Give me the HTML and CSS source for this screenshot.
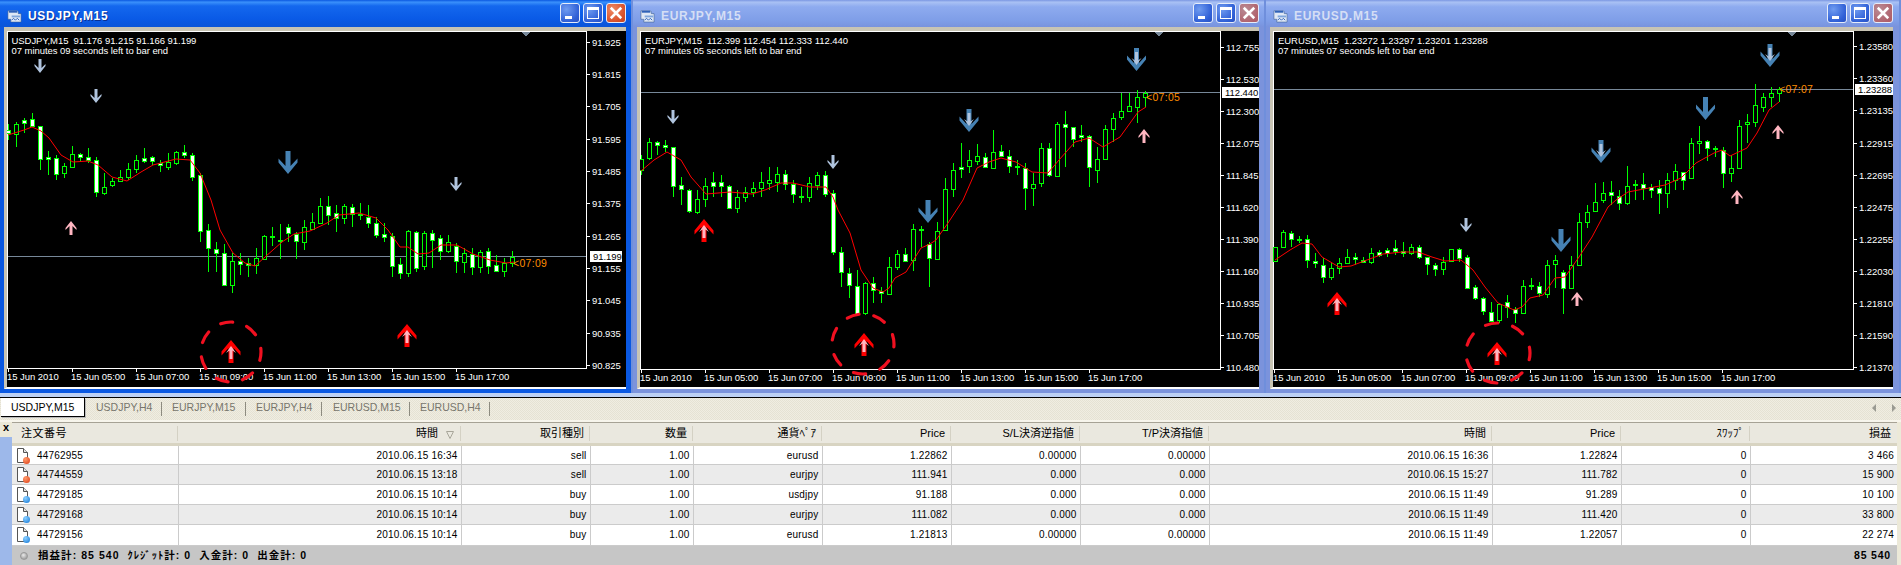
FILE: index.html
```html
<!DOCTYPE html>
<html lang="ja">
<head>
<meta charset="utf-8">
<title>MetaTrader terminal</title>
<link rel="stylesheet" href="styles.css">
</head>
<body>
<svg class="defs" width="0" height="0" aria-hidden="true">
  <symbol id="app" viewBox="0 0 16 16">
    <path d="M1 3h10l1 1v2h3v9H4v-3H1z" fill="#dfe8f5" stroke="#3d5c8c" stroke-width=".6"/>
    <path d="M2 3h9v2H2z" fill="#2f62b8"/>
    <path d="M5 8h9v2H5z" fill="#7fa6dc"/>
    <path d="M5 13l2-2 2 2 2-2 2 2" fill="none" stroke="#2f62b8"/>
  </symbol>
  <symbol id="doc" viewBox="0 0 14 17">
    <path d="M1.5 1.5h6l4 4v10h-10z" fill="#fff" stroke="#555"/>
    <path d="M7.500 1.500v4h4" fill="#e4e4e4" stroke="#555"/>
  </symbol>
</svg>

<div class="desktop">
  <section class="window active">
    <header class="title">
      <svg class="app-icon"><use href="#app"/></svg>
      <span class="title-text">USDJPY,M15</span>
      <span class="btn btn-min"><i></i></span>
      <span class="btn btn-max"><i></i></span>
      <span class="btn btn-close">
        <svg viewBox="0 0 12 12"><path d="M1.500 1.500l9 9m0-9l-9 9"/></svg>
      </span>
    </header>
    <div class="client"><svg class="chart" id="usdjpy"></svg></div>
  </section>
  <section class="window">
    <header class="title">
      <svg class="app-icon"><use href="#app"/></svg>
      <span class="title-text">EURJPY,M15</span>
      <span class="btn btn-min"><i></i></span>
      <span class="btn btn-max"><i></i></span>
      <span class="btn btn-close">
        <svg viewBox="0 0 12 12"><path d="M1.500 1.500l9 9m0-9l-9 9"/></svg>
      </span>
    </header>
    <div class="client"><svg class="chart" id="eurjpy"></svg></div>
  </section>
  <section class="window wide">
    <header class="title">
      <svg class="app-icon"><use href="#app"/></svg>
      <span class="title-text">EURUSD,M15</span>
      <span class="btn btn-min"><i></i></span>
      <span class="btn btn-max"><i></i></span>
      <span class="btn btn-close">
        <svg viewBox="0 0 12 12"><path d="M1.500 1.500l9 9m0-9l-9 9"/></svg>
      </span>
    </header>
    <div class="client"><svg class="chart" id="eurusd"></svg></div>
  </section>
</div>

<nav class="tabs">
  <span class="tab current">USDJPY,M15</span>
  <span class="tab">USDJPY,H4</span>
  <span class="tab">EURJPY,M15</span>
  <span class="tab">EURJPY,H4</span>
  <span class="tab">EURUSD,M15</span>
  <span class="tab">EURUSD,H4</span>
  <span class="scroll">
    <svg viewBox="0 0 24 8"><path d="M4 0v8L0 4zM20 0v8l4-4z"/></svg>
  </span>
</nav>

<main class="terminal">
  <aside class="side"><b class="side-x">x</b><div class="side-fill"></div></aside>
  <table class="orders">
    <colgroup>
      <col class="c-order"><col class="c-time"><col class="c-m"><col class="c-qty"><col class="c-m"><col class="c-m">
      <col class="c-m"><col class="c-m"><col class="c-time"><col class="c-m"><col class="c-m"><col class="c-last">
    </colgroup>
    <thead>
      <tr>
        <th class="left"><span>注文番号</span></th>
        <th class="sorted"><span>時間<svg class="sort" viewBox="0 0 8 8"><path d="M.5.500h7L4 7.500z"/></svg></span></th>
        <th><span>取引種別</span></th>
        <th><span>数量</span></th>
        <th><span>通貨ﾍﾟｱ</span></th>
        <th><span>Price</span></th>
        <th><span>S/L決済逆指値</span></th>
        <th><span>T/P決済指値</span></th>
        <th><span>時間</span></th>
        <th><span>Price</span></th>
        <th><span>ｽﾜｯﾌﾟ</span></th>
        <th class="end"><span>損益</span></th>
      </tr>
    </thead>
    <tbody>
      <tr>
        <td class="order"><span class="icon"><svg><use href="#doc"/></svg><i class="dot red"></i></span>44762955</td>
        <td>2010.06.15 16:34</td><td>sell</td><td>1.00</td><td>eurusd</td><td>1.22862</td><td>0.00000</td><td>0.00000</td>
        <td>2010.06.15 16:36</td><td>1.22824</td><td>0</td><td>3 466</td>
      </tr>
      <tr>
        <td class="order"><span class="icon"><svg><use href="#doc"/></svg><i class="dot red"></i></span>44744559</td>
        <td>2010.06.15 13:18</td><td>sell</td><td>1.00</td><td>eurjpy</td><td>111.941</td><td>0.000</td><td>0.000</td>
        <td>2010.06.15 15:27</td><td>111.782</td><td>0</td><td>15 900</td>
      </tr>
      <tr>
        <td class="order"><span class="icon"><svg><use href="#doc"/></svg><i class="dot blue"></i></span>44729185</td>
        <td>2010.06.15 10:14</td><td>buy</td><td>1.00</td><td>usdjpy</td><td>91.188</td><td>0.000</td><td>0.000</td>
        <td>2010.06.15 11:49</td><td>91.289</td><td>0</td><td>10 100</td>
      </tr>
      <tr>
        <td class="order"><span class="icon"><svg><use href="#doc"/></svg><i class="dot blue"></i></span>44729168</td>
        <td>2010.06.15 10:14</td><td>buy</td><td>1.00</td><td>eurjpy</td><td>111.082</td><td>0.000</td><td>0.000</td>
        <td>2010.06.15 11:49</td><td>111.420</td><td>0</td><td>33 800</td>
      </tr>
      <tr>
        <td class="order"><span class="icon"><svg><use href="#doc"/></svg><i class="dot blue"></i></span>44729156</td>
        <td>2010.06.15 10:14</td><td>buy</td><td>1.00</td><td>eurusd</td><td>1.21813</td><td>0.00000</td><td>0.00000</td>
        <td>2010.06.15 11:49</td><td>1.22057</td><td>0</td><td>22 274</td>
      </tr>
    </tbody>
    <tfoot>
      <tr>
        <td colspan="11" class="summary"><i class="bullet"></i>損益計: 85 540&nbsp; ｸﾚｼﾞｯﾄ計: 0&nbsp; 入金計: 0&nbsp; 出金計: 0</td>
        <td class="total">85 540</td>
      </tr>
    </tfoot>
  </table>
</main>
<script src="chart.js"></script>
</body>
</html>
```
FILE: styles.css
```css
* { box-sizing: border-box; }
html, body { margin: 0; height: 565px; overflow: hidden; background: #ece9d8; }
body { font-family: "Liberation Sans", "Noto Sans CJK JP", sans-serif; font-size: 10px; color: #000; }
.defs { position: absolute; }

/* MDI area with the three chart windows */
.desktop {
  display: flex; gap: 2px; height: 398px;
  background: linear-gradient(#6f8fdc 0 393px, #bcd0f4 393px 397px, #000 397px);
}
.window {
  width: 631px; height: 393px; display: flex; flex-direction: column;
  padding: 0 5px 4px 4px; background: #7b93dc;
}
.window.wide { width: 633px; padding-right: 6px; }
.window.active { background: #0a58e2; }
.title {
  height: 27px; margin: 0 -5px 0 -4px; padding: 3px 5px 0 7px;
  display: flex; align-items: flex-start; gap: 3px;
  background: linear-gradient(#7b97e2 0, #a9c1f4 8%, #8eabef 25%, #7f9ee8 75%, #7993dd 100%);
}
.wide .title { margin-right: -6px; padding-right: 6px; }
.active .title { background: linear-gradient(#0a58e0 0, #3a90fb 8%, #1468ee 22%, #0a5ae6 70%, #0b55d8 100%); }
.app-icon { width: 15px; height: 15px; margin-top: 5px; flex: none; }
.title-text {
  flex: 1; margin: 6px 0 0 3px; font-size: 12px; font-weight: 700; letter-spacing: .7px;
  line-height: 14px; color: #d5def5;
}
.active .title-text { color: #fff; text-shadow: 1px 1px 0 #0a2f90; }
.btn {
  width: 20px; height: 20px; flex: none; position: relative; border: 1px solid #e6edfb; border-radius: 3px;
  background: radial-gradient(circle at 30% 30%, #6f9bf0, #2f5fd6 70%, #2a52c0);
}
.btn-min i { position: absolute; left: 4px; bottom: 3px; width: 7px; height: 3px; background: #fff; }
.btn-max i { position: absolute; left: 3px; top: 3px; width: 12px; height: 12px; border: 1px solid #fff; border-top-width: 3px; }
.btn-close { background: radial-gradient(circle at 30% 30%, #b98a94, #b0606a 80%); }
.active .btn-close { background: radial-gradient(circle at 30% 30%, #ee8a64, #d8502a 70%, #c24420); }
.btn-close svg { display: block; width: 14px; height: 14px; margin: 2px; fill: none; stroke: #fff; stroke-width: 2.200; }
.client {
  flex: 1; min-height: 0; padding-top: 0;
  border-style: solid; border-width: 4px 0 2px 3px;
  border-color: #c8c4b4 #fff #fff #c8c4b4;
}
.chart { display: block; background: #000; }

/* SVG chart pieces */
.lbl { font-size: 9.500px; fill: #fff; letter-spacing: -.05px; }
.info { white-space: pre; }
.bid { fill: #000; }
.countdown { font-size: 10.500px; fill: #ff8c00; letter-spacing: .3px; }
.crisp { shape-rendering: crispEdges; }

/* Tabs */
.tabs {
  height: 24px; display: flex; align-items: flex-start;
  background: repeating-conic-gradient(#f0ede2 0 25%, #e5e2d3 0 50%) 0 0 / 2px 2px;
  border-bottom: 2px solid #f7f5ec; color: #77756c; font-size: 10.500px;
}
.tab { height: 19px; line-height: 19px; padding: 0 12px 0 10px; margin-top: 0; position: relative; }
.tab::after { content: ""; position: absolute; right: 0; top: 4px; height: 14px; width: 1px; background: #8d8b80; }
.tab.current {
  margin: 0 1px 0 1px; width: 84px; padding-left: 10px; background: #fff; color: #000;
  border-right: 1px solid #000; border-bottom: 1px solid #000; box-shadow: 1px 1px 0 #bbb;
}
.tab.current::after { display: none; }
.tab:nth-child(2) { width: 76px; padding-left: 10px; }
.tab:nth-child(3), .tab:nth-child(5) { width: 84px; padding-left: 10px; }
.tab:nth-child(4), .tab:nth-child(6) { width: 76px; padding-left: 10px; }
.tab:nth-child(5) { width: 88px; padding-left: 11px; }
.tab:nth-child(6) { width: 80px; }
.scroll { margin: 6px 5px 0 auto; width: 24px; height: 8px; }
.scroll svg { display: block; fill: #9a9a92; }

/* Terminal table */
.terminal { display: flex; height: 143px; }
.side { width: 12px; flex: none; display: flex; flex-direction: column; }
.side-x { height: 15px; line-height: 11px; text-align: center; font-size: 11px; }
.side-fill { flex: 1; background: #9db8ea; }
.orders { width: 1885px; table-layout: fixed; border-collapse: collapse; border-top: 1px solid #a6a295; background: #fff; }
.c-order { width: 166px; }
.c-time { width: 283px; }
.c-m { width: 129px; }
.c-qty { width: 103px; }
.c-last { width: 147px; }
th {
  height: 22px; padding: 0; text-align: right; font-weight: 400; font-size: 11px;
  background: repeating-conic-gradient(#eceae2 0 25%, #e7e5db 0 50%) 0 0 / 2px 2px;
  border-bottom: 3px solid #d8d4c2;
}
th span { display: block; height: 15px; line-height: 15px; padding-right: 5px; border-right: 1px solid #d4d1c4; }
th.left { text-align: left; }
th.left span { padding-left: 9px; letter-spacing: .5px; }
th.end span { border-right: 0; padding-right: 6px; }
th.sorted span { padding-right: 22px; position: relative; }
.sort { position: absolute; right: 6px; top: 5px; width: 8px; height: 8px; fill: none; stroke: #a8a69a; }
td {
  height: 20px; padding: 0 3px 0 0; text-align: right; font-size: 10px; letter-spacing: .2px;
  border-right: 1px solid #cbcbcb; border-bottom: 1px solid #cbcbcb; white-space: nowrap; overflow: hidden;
}
tbody tr:nth-child(even) td { background: repeating-conic-gradient(#eeeeee 0 25%, #e8e8e8 0 50%) 0 0 / 2px 2px; }
tbody td:last-child { border-right: 0; }
td.order { text-align: left; padding-left: 4px; }
.icon { display: inline-block; position: relative; width: 14px; height: 17px; margin-right: 7px; vertical-align: -5px; }
.icon svg { width: 14px; height: 17px; display: block; }
.dot { position: absolute; right: 0; bottom: 0; width: 7px; height: 7px; border-radius: 50%; }
.red { background: radial-gradient(circle at 35% 30%, #ff9a6a, #de3b12); }
.blue { background: radial-gradient(circle at 35% 30%, #8cd0ff, #0f76d8); }
tfoot td { background: #c6c6c6; border: 0; font-weight: 700; height: 20px; padding-bottom: 1px; }
td.summary { text-align: left; padding-left: 8px; font-size: 10.500px; letter-spacing: 1.050px; }
td.total { padding-right: 6px; font-size: 10.500px; letter-spacing: .8px; }
.bullet {
  display: inline-block; width: 8px; height: 8px; margin-right: 10px; vertical-align: -1px; border-radius: 50%;
  background: radial-gradient(circle at 40% 35%, #e8e8e8, #8a8a8a); border: 1px solid #999;
}
```
FILE: chart.js
```js
const NS = "http://www.w3.org/2000/svg";
const TIMES = ["15 Jun 2010", "15 Jun 05:00", "15 Jun 07:00", "15 Jun 09:00", "15 Jun 11:00", "15 Jun 13:00", "15 Jun 15:00", "15 Jun 17:00"];

const UP = "M0 0L9.500 11.500V15.500L2.500 8V23H-2.500V8L-9.500 15.500V11.500Z";
const UP_CORE = "M0 6L5 13L1.500 10.500V19H-1.500V10.500L-5 13Z";
const SMALL_UP = "M0 0L5.500 7V9L1.500 5V14H-1.500V5L-5.500 9V7Z";

/* Candles are [high, bodyTop, bodyBottom, low, filledWhite] in page pixels. */
const CHARTS = {
  usdjpy: {
    box: [7, 31, 619, 356], plot: [7, 31, 586, 368], x0: 8.2,
    info: ["USDJPY,M15  91.176 91.215 91.166 91.199", "07 minutes 09 seconds left to bar end"],
    infoX: 11.5, bid: { y: 256, text: "91.199", x: 590, w: 32, cx: 513, cy: 263, cd: "<07:09" }, tri: 526,
    prices: [["91.925",42],["91.815",74],["91.705",106],["91.595",139],["91.485",171],["91.375",203],["91.265",236],["91.155",268],["91.045",300],["90.935",333],["90.825",365]],
    ring: [231, 352, 30, 30, 2],
    arrows: [["sd",40,59],["sd",96,89],["sd",456,177],["bd",288,151,0],["su",71,221],["bu",407,324],["bu",231,340]],
    ma: [[8,135],[24,130],[32,127],[41,131],[49,138],[61,155],[73,162],[88,161],[98,165],[112,177],[127,181],[141,172],[153,165],[176,159],[190,160],[200,173],[211,200],[220,230],[233,253],[245,263],[255,266],[265,257],[282,242],[294,234],[310,231],[327,223],[339,215],[359,213],[376,218],[388,230],[400,247],[408,247],[418,254],[429,253],[441,245],[457,245],[473,254],[490,260],[506,263],[514,262]],
    candles: [[124,130,133,140,1],[122,124,134,147,0],[118,120,123,133,1],[113,119,126,127,1],[126,126,159,170,1],[151,157,159,175,1],[155,158,174,180,1],[163,166,173,178,0],[146,154,167,168,0],[153,154,157,162,1],[148,157,160,163,1],[157,160,192,197,1],[173,187,193,195,0],[178,181,185,187,0],[170,177,181,182,0],[163,169,177,180,0],[155,160,169,173,0],[148,158,161,163,1],[156,157,161,165,1],[160,163,165,172,1],[153,162,167,170,0],[151,152,163,165,0],[145,152,155,158,1],[153,155,177,181,1],[173,175,231,242,1],[224,230,248,272,1],[242,249,253,272,1],[244,253,285,285,1],[253,261,285,293,0],[253,261,264,275,1],[258,263,265,277,1],[248,258,265,274,0],[235,236,259,260,0],[227,236,237,246,0],[224,240,241,259,0],[224,227,233,242,1],[232,234,241,259,1],[220,227,242,250,0],[213,222,229,230,0],[198,206,223,224,0],[196,206,215,225,1],[205,213,218,232,1],[204,206,218,224,0],[204,207,214,227,1],[203,214,215,220,0],[205,217,223,228,1],[217,223,235,238,1],[223,234,237,242,1],[233,236,266,277,1],[258,264,273,279,1],[230,231,273,277,0],[231,232,268,272,1],[231,233,266,270,0],[230,233,240,268,1],[235,238,251,260,1],[235,242,251,253,0],[243,246,261,273,1],[248,253,262,273,0],[248,254,267,275,1],[250,252,267,273,0],[248,251,266,274,1],[255,265,271,272,1],[258,263,271,277,0],[251,257,263,267,0]]
  },
  eurjpy: {
    box: [640, 31, 619, 356], plot: [640, 31, 1220, 369], x0: 641.4,
    info: ["EURJPY,M15  112.399 112.454 112.333 112.440", "07 minutes 05 seconds left to bar end"],
    infoX: 645, bid: { y: 92, text: "112.440", x: 1222, w: 37, cx: 1146, cy: 97, cd: "<07:05" }, tri: 1159,
    prices: [["112.755",47],["112.530",79],["112.300",111],["112.075",143],["111.845",175],["111.620",207],["111.390",239],["111.160",271],["110.935",303],["110.705",335],["110.480",367]],
    ring: [863, 344, 31, 30, 5],
    arrows: [["sd",673,110],["sd",833,155],["bd",969,109,1],["bd",1136.500,48,1],["bd",928,200,0],["su",1144,129],["bu",704,219],["bu",864,333]],
    ma: [[641,171],[654,160],[667,152],[681,160],[691,177],[706,194],[730,192],[752,194],[765,190],[781,183],[793,183],[810,187],[826,187],[833,197],[838,210],[850,233],[861,270],[873,288],[883,292],[889,288],[895,278],[906,272],[921,248],[930,244],[936,240],[948,223],[963,200],[977,168],[989,162],[1001,158],[1016,162],[1032,172],[1048,173],[1059,160],[1075,142],[1089,138],[1103,147],[1120,137],[1138,112],[1146,107]],
    candles: [[155,159,170,175,0],[138,142,158,160,0],[141,142,145,155,1],[140,145,147,152,1],[147,147,186,197,1],[177,185,189,205,1],[189,190,211,213,1],[190,199,212,214,0],[178,186,199,207,0],[172,182,186,197,1],[175,182,186,197,1],[185,186,208,208,1],[190,197,208,213,0],[187,192,197,202,0],[182,188,192,197,0],[172,182,188,197,0],[167,180,183,190,0],[167,174,182,192,0],[170,174,184,190,1],[180,184,194,203,1],[187,196,197,203,1],[177,183,197,202,0],[172,175,185,190,0],[171,175,194,197,1],[190,193,252,255,1],[247,252,272,287,1],[268,273,285,298,1],[270,286,314,315,1],[282,283,313,315,0],[277,283,290,303,1],[287,291,293,303,1],[257,267,294,295,0],[250,254,267,270,0],[248,254,261,262,1],[224,229,260,271,0],[226,229,230,247,0],[242,244,258,287,1],[222,231,259,259,0],[178,189,230,231,0],[163,170,189,197,0],[143,167,169,178,1],[150,160,166,173,0],[144,156,161,165,0],[153,157,167,168,1],[130,152,168,168,0],[145,151,156,157,1],[150,156,166,173,1],[160,166,167,175,1],[163,168,188,210,1],[173,184,188,206,0],[143,148,183,187,0],[143,148,175,177,1],[122,124,176,177,0],[111,124,127,167,1],[127,127,139,147,1],[125,135,137,142,1],[135,136,167,187,1],[147,159,170,183,0],[125,129,159,160,0],[113,118,129,142,0],[93,111,117,120,0],[93,106,111,112,0],[90,97,107,123,0],[91,93,97,107,0]]
  },
  eurusd: {
    box: [1273, 31, 620, 356], plot: [1273, 31, 1853, 369], x0: 1275.3,
    info: ["EURUSD,M15  1.23272 1.23297 1.23201 1.23288", "07 minutes 07 seconds left to bar end"],
    infoX: 1278, bid: { y: 89, text: "1.23288", x: 1855, w: 38, cx: 1779, cy: 89, cd: "<07:07" }, tri: 1792,
    prices: [["1.23580",46],["1.23360",78],["1.23135",110],["1.22915",143],["1.22695",175],["1.22475",207],["1.22255",239],["1.22030",271],["1.21810",303],["1.21590",335],["1.21370",367]],
    ring: [1498, 353, 32, 30, 3],
    arrows: [["bd",1601,140,1],["bd",1705.500,97,0],["bd",1770,44,1],["bd",1561,229,0],["sd",1466,218],["su",1778,125],["su",1737,190],["su",1577,292],["bu",1337,292],["bu",1497,342]],
    ma: [[1275,260],[1290,250],[1302,243],[1312,244],[1322,257],[1339,267],[1351,266],[1367,260],[1383,254],[1402,252],[1418,252],[1432,257],[1445,261],[1461,260],[1473,270],[1485,287],[1498,303],[1514,310],[1522,307],[1530,298],[1543,295],[1555,278],[1565,277],[1579,257],[1592,237],[1608,207],[1616,200],[1628,192],[1649,188],[1665,185],[1681,178],[1696,163],[1714,153],[1722,150],[1730,156],[1747,148],[1757,133],[1769,110],[1779,102]],
    candles: [[247,247,261,262,0],[230,232,247,248,0],[231,233,239,247,1],[236,239,240,243,1],[235,239,260,268,1],[253,261,263,268,1],[258,265,277,283,1],[263,268,277,280,0],[258,263,268,274,0],[249,257,263,263,0],[253,257,259,265,1],[257,260,262,263,1],[248,253,262,264,0],[250,252,255,257,1],[248,250,253,257,1],[240,248,251,255,1],[242,251,253,257,1],[244,247,253,255,0],[245,247,257,259,1],[257,257,264,275,1],[263,265,269,276,1],[257,262,269,275,0],[249,249,261,262,0],[248,249,258,262,1],[255,257,288,288,1],[285,287,298,300,1],[297,298,311,315,1],[302,312,321,322,1],[303,304,320,323,0],[295,302,307,318,1],[307,309,313,323,1],[280,286,313,313,0],[278,285,286,290,0],[282,286,293,297,1],[260,265,294,298,0],[255,260,264,288,0],[270,272,288,314,1],[256,265,288,288,0],[213,222,265,265,0],[205,212,222,228,0],[183,202,211,212,0],[182,193,200,203,0],[181,192,195,205,1],[190,196,203,210,1],[166,186,203,205,0],[180,184,185,200,0],[173,184,188,200,1],[184,187,190,198,1],[180,188,193,214,1],[173,180,193,208,0],[164,171,180,190,0],[172,172,180,190,1],[138,143,178,178,0],[126,141,143,154,0],[140,141,148,161,1],[146,148,149,157,1],[147,150,173,188,1],[155,168,173,182,0],[120,126,168,168,0],[114,122,124,143,0],[84,105,122,127,0],[93,97,107,112,0],[87,93,97,107,0],[87,89,93,102,0]]
  }
};

function el(parent, name, attrs, text) {
  const node = document.createElementNS(NS, name);
  for (const key in attrs) node.setAttribute(key, attrs[key]);
  if (text !== undefined) node.textContent = text;
  parent.appendChild(node);
  return node;
}

function arrow(svg, a) {
  const kind = a[0], x = a[1], y = a[2];
  const g = el(svg, "g", {});
  if (kind === "bu") {
    g.setAttribute("transform", `translate(${x} ${y})`);
    el(g, "path", { d: UP, fill: "#ff0000" });
    el(g, "path", { d: UP_CORE, fill: "#ffb6c1" });
  } else if (kind === "bd") {
    g.setAttribute("transform", `translate(${x} ${y + 23}) scale(1 -1)`);
    el(g, "path", { d: UP, fill: "#4682b4" });
    if (a[3]) el(g, "path", { d: UP_CORE, fill: "#b0c4de" });
  } else if (kind === "su") {
    g.setAttribute("transform", `translate(${x} ${y})`);
    el(g, "path", { d: SMALL_UP, fill: "#ffb6c1" });
  } else {
    g.setAttribute("transform", `translate(${x} ${y + 14}) scale(1 -1)`);
    el(g, "path", { d: SMALL_UP, fill: "#b0c4de" });
  }
}

function draw(id, c) {
  const svg = document.getElementById(id);
  const [bx, by, bw, bh] = c.box;
  const [l, t, r, b] = c.plot;
  svg.setAttribute("viewBox", `${bx} ${by} ${bw} ${bh}`);
  svg.setAttribute("width", bw);
  svg.setAttribute("height", bh);

  const crisp = el(svg, "g", { class: "crisp" });
  el(crisp, "rect", { x: l + .5, y: t + .5, width: r - l, height: b - t, fill: "none", stroke: "#fff" });
  for (const [, y] of c.prices) el(crisp, "path", { d: `M${r} ${y + .5}h4`, stroke: "#fff" });
  TIMES.forEach((_, i) => el(crisp, "path", { d: `M${l + 1 + 64 * i + .5} ${b}v4`, stroke: "#fff" }));
  el(crisp, "path", { d: `M${l + 1} ${c.bid.y + .5}H${r}`, stroke: "#778899" });
  el(crisp, "path", { d: `M${c.tri - 4} ${t + 1}h8l-4 5z`, fill: "#778899" });

  c.candles.forEach((k, i) => {
    const x = Math.round(c.x0 + 8 * i);
    el(crisp, "path", { d: `M${x + .5} ${k[0]}V${k[3]}`, stroke: "#00ff00" });
    el(crisp, "rect", { x: x - 1.500, y: k[1] + .5, width: 4, height: Math.max(k[2] - k[1], 1), fill: k[4] ? "#fff" : "#000", stroke: "#00ff00" });
  });
  el(svg, "polyline", { points: c.ma.join(" "), fill: "none", stroke: "#ff0000", "stroke-width": 1 });

  c.arrows.forEach(a => arrow(svg, a));

  el(svg, "text", { class: "lbl info", x: c.infoX, y: 44 }, c.info[0]);
  el(svg, "text", { class: "lbl info", x: c.infoX, y: 54 }, c.info[1]);
  for (const [label, y] of c.prices) el(svg, "text", { class: "lbl", x: r + 6, y: y + 3.500 }, label);
  TIMES.forEach((label, i) => el(svg, "text", { class: "lbl", x: l + 64 * i, y: b + 12 }, label));

  el(svg, "rect", { class: "crisp", x: c.bid.x, y: c.bid.y - 5.500, width: c.bid.w, height: 11, fill: "#fff" });
  el(svg, "text", { class: "lbl bid", x: c.bid.x + 3, y: c.bid.y + 3.500 }, c.bid.text);
  el(svg, "text", { class: "countdown", x: c.bid.cx, y: c.bid.cy + 4 }, c.bid.cd);

  const [cx, cy, rx, ry, off] = c.ring;
  el(svg, "ellipse", { cx, cy, rx, ry, fill: "none", stroke: "#f01020", "stroke-width": 3.200, "stroke-linecap": "round", pathLength: 100, "stroke-dasharray": "6.500 7.786", "stroke-dashoffset": off });
}

for (const id in CHARTS) draw(id, CHARTS[id]);
```
